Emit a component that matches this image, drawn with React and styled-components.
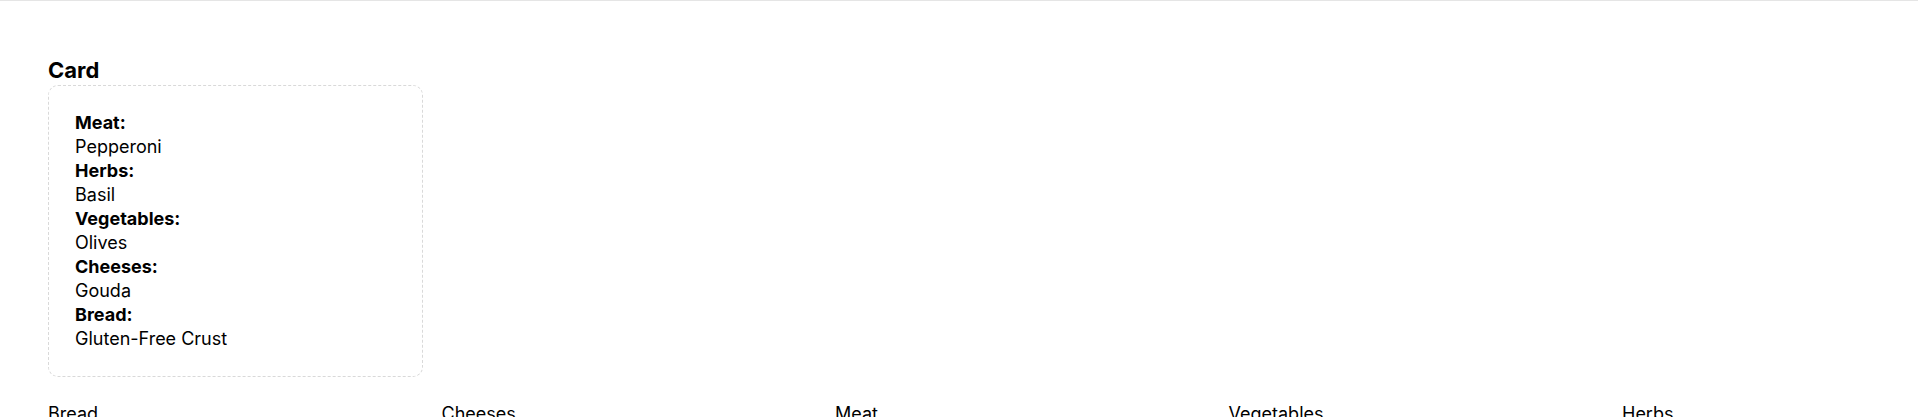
import React from 'react';
import styled, { createGlobalStyle } from 'styled-components';

const GlobalStyle = createGlobalStyle`
  body {
    margin: 0;
    background: #fff;
    color: #000;
    font-family: Inter, 'Noto Sans', sans-serif;
  }
`;

const Page = styled.main`
  border-top: 1px solid #e5e5e5;
  padding: 55px 48px 0;
`;

const Title = styled.h2`
  margin: 0;
  font-size: 22px;
  font-weight: 700;
  line-height: 29px;
`;

const Card = styled.dl`
  box-sizing: border-box;
  width: 375px;
  margin: 0;
  padding: 25px 26px;
  border: 1px dashed #d9d9d9;
  border-radius: 10px;
  font-size: 18px;
  line-height: 24px;
`;

const Term = styled.dt`
  font-weight: 700;
`;

const Value = styled.dd`
  margin: 0;
  font-weight: 400;
`;

const Columns = styled.div`
  display: grid;
  grid-template-columns: repeat(5, 375px);
  column-gap: 18.5px;
  margin-top: 25px;
`;

const Column = styled.section`
  font-size: 18px;
  line-height: 24px;
`;

const toppings = [
  ['Meat', 'Pepperoni'],
  ['Herbs', 'Basil'],
  ['Vegetables', 'Olives'],
  ['Cheeses', 'Gouda'],
  ['Bread', 'Gluten-Free Crust']
];

const categories = ['Bread', 'Cheeses', 'Meat', 'Vegetables', 'Herbs'];

const App = () => {
  return (
    <>
      <GlobalStyle />
      <Page>
        <Title>Card</Title>
        <Card>
          {toppings.map(([term, value]) => (
            <React.Fragment key={term}>
              <Term>{term}:</Term>
              <Value>{value}</Value>
            </React.Fragment>
          ))}
        </Card>
        <Columns>
          {categories.map(name => (
            <Column key={name}>{name}</Column>
          ))}
        </Columns>
      </Page>
    </>
  );
};

export default App;
